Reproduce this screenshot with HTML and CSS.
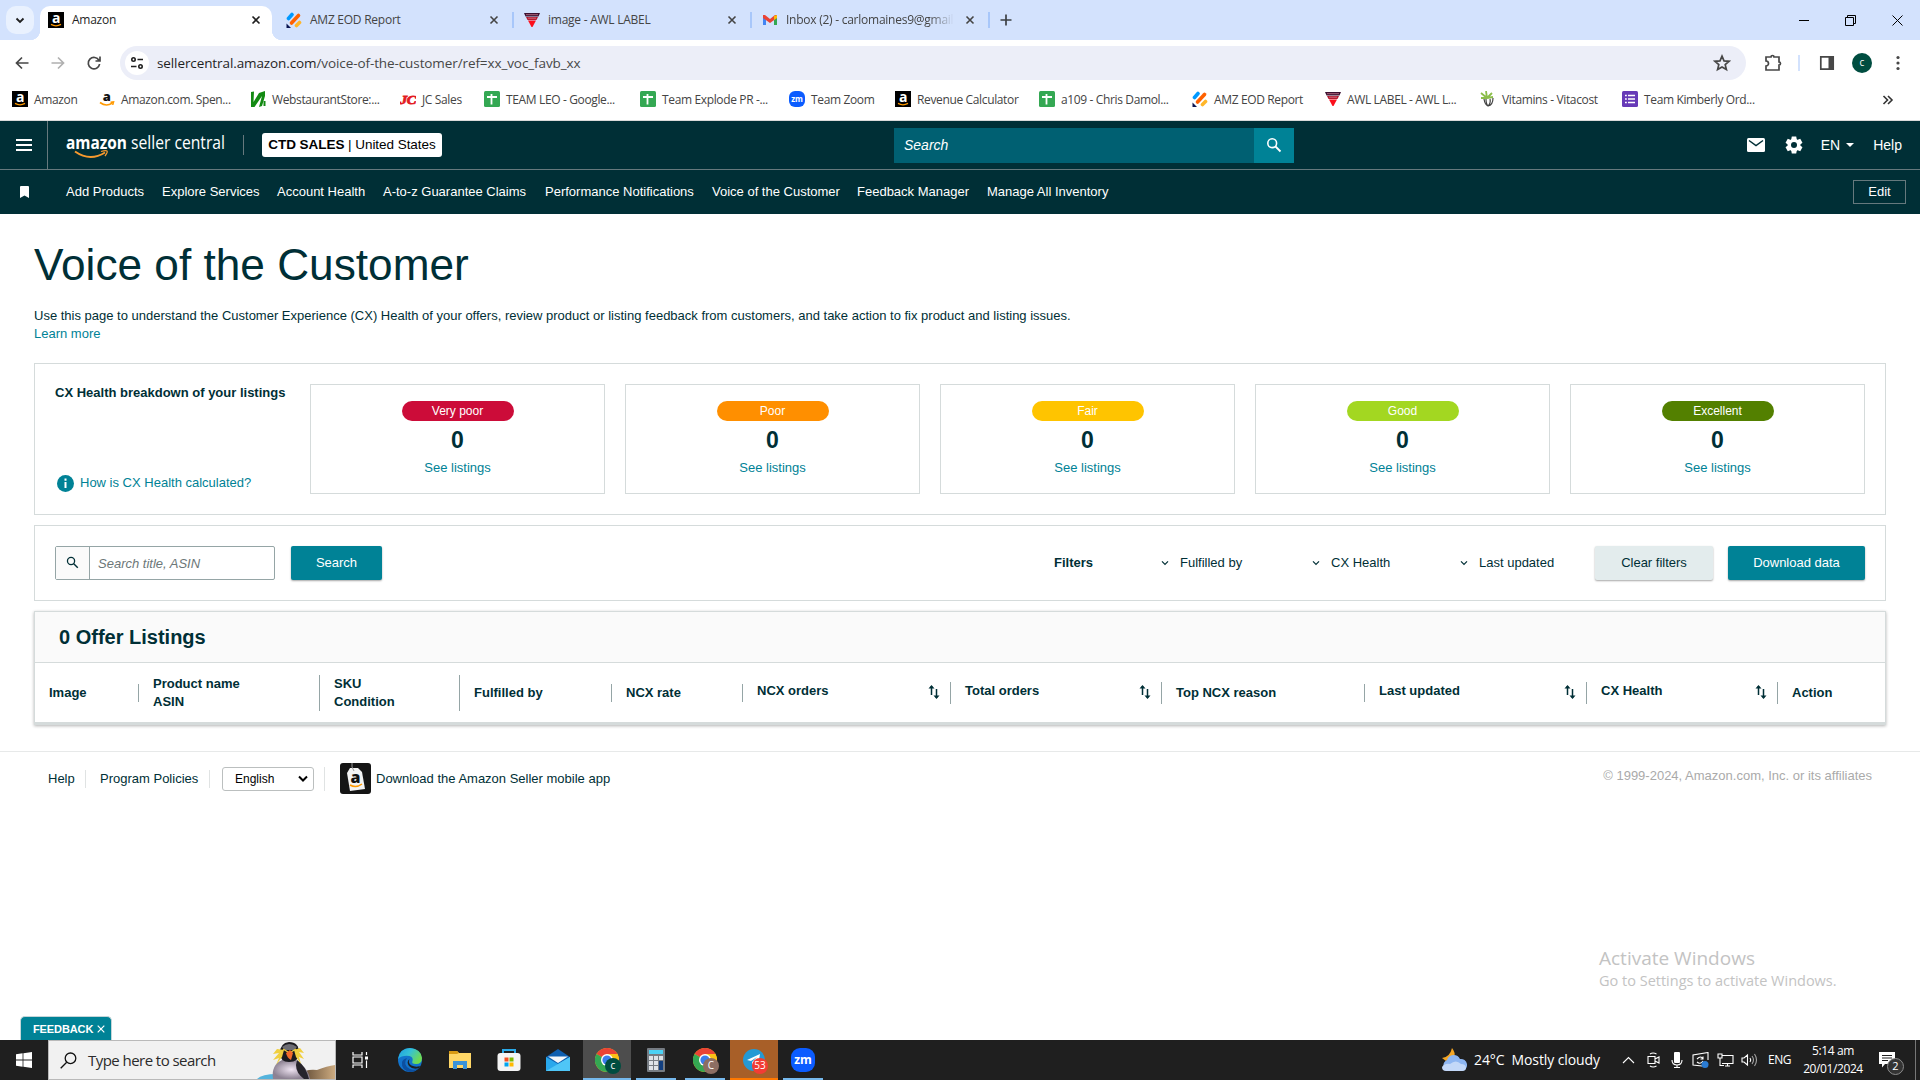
FILE: index.html
```html
<!DOCTYPE html>
<html lang="en">
<head>
  <meta charset="UTF-8" />
  <title>Amazon</title>
  <link rel="stylesheet" href="styles.css">
</head>
<body>
  <svg class="defs" width="0" height="0">
    <symbol id="amz" viewBox="0 0 16 16"><rect width="16" height="16" fill="#000"/><text x="8" y="11" text-anchor="middle" font-family="Open Sans" font-weight="700" font-size="14" fill="#fff">a</text><path d="M3 12.4q5 2.8 10 0" stroke="#f90" stroke-width="1.3" fill="none"/></symbol>
    <symbol id="amz-light" viewBox="0 0 16 16"><text x="7.5" y="10" text-anchor="middle" font-family="Open Sans" font-weight="800" font-size="13" fill="#111">a</text><path d="M1 11.5q6 4.500 12 .8M11.500 11.200l3-.3-.8 3" stroke="#f90" stroke-width="1.600" fill="none"/></symbol>
    <symbol id="jot" viewBox="0 0 16 16"><g stroke-linecap="round" stroke-width="3.600"><path d="M2.500 6.500L6 2.500" stroke="#0099ff"/><path d="M5.500 11L12.500 3.500" stroke="#ff6100"/><path d="M10.500 13.500L13.500 10.500" stroke="#ffb629"/></g><path d="M.5 11.500v4.500h4.500z" fill="#0a1551"/></symbol>
    <symbol id="awl" viewBox="0 0 16 16"><path d="M0 1h16l-1.500 3.500h-13z" fill="#3b1030"/><path d="M2 5h12l-1.500 3h-9z" fill="#b31a30"/><path d="M4 8.500h8L8.500 15h-1z" fill="#fb0f1c"/><path d="M2 2.700h12M4 6.200h8" stroke="#d89" stroke-width=".7"/></symbol>
    <symbol id="sheet" viewBox="0 0 16 16"><rect width="16" height="16" rx="1.500" fill="#34a853"/><path d="M3 6h10M7.500 3v10.500" stroke="#fff" stroke-width="1.800"/></symbol>
    <symbol id="zm" viewBox="0 0 24 24"><rect width="24" height="24" rx="9" fill="#0b5cff"/><text x="12" y="16" text-anchor="middle" font-family="Open Sans" font-weight="700" font-size="12" fill="#fff">zm</text></symbol>
    <symbol id="close" viewBox="0 0 10 10"><path d="M1.500 1.500l7 7M8.500 1.500l-7 7" stroke="currentColor" stroke-width="1.600"/></symbol>
    <symbol id="lens" viewBox="0 0 16 16"><circle cx="6.200" cy="6.200" r="4.400" fill="none" stroke="currentColor" stroke-width="1.600"/><path d="M9.500 9.500l5 5" stroke="currentColor" stroke-width="1.800"/></symbol>
    <symbol id="chev" viewBox="0 0 8 8"><path d="M1 2.300l3 3 3-3" fill="none" stroke="#002f36" stroke-width="1.200"/></symbol>
    <symbol id="sort" viewBox="0 0 12 16"><path d="M3.500 11V2M8.500 5v9" fill="none" stroke="#002f36" stroke-width="1.500"/><path d="M.5 4.500L3.500 1l3 3.500zM5.500 11.500l3 3.500 3-3.500z" fill="#002f36"/></symbol>
    <symbol id="chrome" viewBox="0 0 24 24"><circle cx="12" cy="12" r="12" fill="#fbc116"/><path d="M12 12L1.600 6A12 12 0 0 1 22.400 6z" fill="#ea4335"/><path d="M12 12L1.600 6A12 12 0 0 0 12 24l5.200-9z" fill="#34a853"/><path d="M12 6h10.400A12 12 0 0 1 12 24l5.200-9z" fill="#fbc116"/><circle cx="12" cy="12" r="6" fill="#fff"/><circle cx="12" cy="12" r="4.600" fill="#3b7ded"/></symbol>
  </svg>

  <div class="tabstrip">
    <div class="tab-search"><svg width="10" height="10" viewBox="0 0 10 10"><path d="M1.500 3.500L5 7l3.500-3.500" fill="none" stroke="#1f1f1f" stroke-width="1.800"/></svg></div>
    <div class="tab active"><svg class="fav"><use href="#amz"/></svg><span>Amazon</span><svg class="x"><use href="#close"/></svg></div>
    <div class="tab"><svg class="fav"><use href="#jot"/></svg><span>AMZ EOD Report</span><svg class="x"><use href="#close"/></svg></div>
    <div class="tab sep"><svg class="fav"><use href="#awl"/></svg><span>image - AWL LABEL</span><svg class="x"><use href="#close"/></svg></div>
    <div class="tab sep"><svg class="fav" viewBox="0 0 16 16"><path d="M1 3.500V13h3V7.500z" fill="#4285f4"/><path d="M15 3.500V13h-3V7.500z" fill="#34a853"/><path d="M1 3v3l7 5 7-5V3h-2L8 7 3 3z" fill="#ea4335"/><path d="M12 4l3-1v3l-3 2z" fill="#fbbc04"/></svg><span class="fade">Inbox (2) - carlomaines9@gmail</span><svg class="x"><use href="#close"/></svg></div>
    <div class="new-tab sep"><svg width="12" height="12" viewBox="0 0 12 12"><path d="M6 .5v11M.5 6h11" stroke="#3c4043" stroke-width="1.700"/></svg></div>
    <div class="win-controls">
      <svg width="10" height="11" viewBox="0 0 10 11"><path d="M0 5.500h10" stroke="#000"/></svg>
      <svg width="11" height="11" viewBox="0 0 11 11"><path d="M.5 2.500h8v8h-8zM2.500 2.500v-2h8v8h-2" fill="none" stroke="#000"/></svg>
      <svg width="11" height="11" viewBox="0 0 11 11"><path d="M.5.5l10 10M10.500.5l-10 10" stroke="#000"/></svg>
    </div>
  </div>

  <div class="toolbar">
    <svg width="16" height="16" viewBox="0 0 16 16" class="ico"><path d="M14.500 8H2.500M8 2.500L2.500 8 8 13.500"/></svg>
    <svg width="16" height="16" viewBox="0 0 16 16" class="ico dim"><path d="M1.500 8h12M8 2.500L13.500 8 8 13.500"/></svg>
    <svg width="16" height="16" viewBox="0 0 16 16" class="ico"><path d="M13 5.500A5.700 5.700 0 1 0 13.600 9M14 1.500v4.500H9.500"/></svg>
    <div class="omnibox">
      <div class="site"><svg width="14" height="14" viewBox="0 0 14 14"><g fill="none" stroke="#1f1f1f" stroke-width="1.600"><circle cx="3.500" cy="3.500" r="1.700"/><path d="M7.500 3.500H13M1 10.500h5.500"/><circle cx="10.500" cy="10.500" r="1.700"/></g></svg></div>
      <span class="url">sellercentral.amazon.com<i>/voice-of-the-customer/ref=xx_voc_favb_xx</i></span>
      <svg width="18" height="18" viewBox="0 0 18 18" class="ico star"><path d="M9 2.200l2 4.700 5 .4-3.800 3.300 1.200 4.900L9 12.900l-4.400 2.600 1.200-4.900L2 7.300l5-.4z"/></svg>
    </div>
    <div class="actions">
      <svg width="20" height="20" viewBox="0 0 20 20" class="ico"><path d="M3 4h5a1.500 1.500 0 0 1 3 0H16v5a1.500 1.500 0 0 1 0 3V17H3v-4a2.300 2.300 0 0 0 0-5z"/></svg>
      <b></b>
      <svg width="16" height="16" viewBox="0 0 16 16"><path d="M1.800 1.800h12.400v12.400H1.800z" fill="none" stroke="#474747" stroke-width="1.700"/><path d="M9.500 2h5v12h-5z" fill="#474747"/></svg>
      <span class="avatar">c</span>
      <svg width="4" height="16" viewBox="0 0 4 16" fill="#474747"><circle cx="2" cy="2.500" r="1.600"/><circle cx="2" cy="8" r="1.600"/><circle cx="2" cy="13.500" r="1.600"/></svg>
    </div>
  </div>

  <div class="bookmarks">
    <a><svg class="fav"><use href="#amz"/></svg>Amazon</a>
    <a><svg class="fav"><use href="#amz-light"/></svg>Amazon.com. Spen...</a>
    <a><svg class="fav" viewBox="0 0 16 16"><path d="M1 1l3-.5L3.500 11 9 2l6-2v5l-3 10-3 1 3-11L4.500 16H1z" fill="#138a13"/><path d="M14.500 10v5" stroke="#138a13" stroke-width="2"/></svg>WebstaurantStore:...</a>
    <a><svg class="fav" viewBox="0 0 16 16"><text x="0" y="12.500" textLength="16" lengthAdjust="spacingAndGlyphs" font-family="Liberation Serif" font-style="italic" font-weight="700" font-size="13" fill="#e31b23" stroke="#e31b23" stroke-width=".8">JC</text></svg>JC Sales</a>
    <a><svg class="fav"><use href="#sheet"/></svg>TEAM LEO - Google...</a>
    <a><svg class="fav"><use href="#sheet"/></svg>Team Explode PR -...</a>
    <a><svg class="fav"><use href="#zm"/></svg>Team Zoom</a>
    <a><svg class="fav"><use href="#amz"/></svg>Revenue Calculator</a>
    <a><svg class="fav"><use href="#sheet"/></svg>a109 - Chris Damol...</a>
    <a><svg class="fav"><use href="#jot"/></svg>AMZ EOD Report</a>
    <a><svg class="fav"><use href="#awl"/></svg>AWL LABEL - AWL L...</a>
    <a><svg class="fav" viewBox="0 0 16 16"><path d="M7 7L1 2M7 7L6 0M7 7l5-5M7 7L1 7M7 7l6-1" stroke="#8bbd4a" stroke-width="1.800"/><path d="M4 8q1 6 4 7 5-1 5-8M6 8q0 5 2 7 3-3 2-7" fill="none" stroke="#444" stroke-width="1.200"/></svg>Vitamins - Vitacost</a>
    <a><svg class="fav" viewBox="0 0 16 16"><rect width="16" height="16" rx="1.500" fill="#673ab7"/><path d="M3 4.500h1.800M3 8h1.800M3 11.500h1.800M6 4.500h7M6 8h7M6 11.500h7" stroke="#fff" stroke-width="1.700"/></svg>Team Kimberly Ord...</a>
    <svg width="12" height="10" viewBox="0 0 12 10"><path d="M1.500 1l4 4-4 4M6 1l4 4-4 4" fill="none" stroke="#333" stroke-width="1.600"/></svg>
  </div>

  <header class="sc-header">
    <div class="menu"><i></i><i></i><i></i></div>
    <svg class="logo" width="160" height="34" viewBox="0 0 160 34">
      <text x="0" y="21" textLength="61" lengthAdjust="spacingAndGlyphs" font-family="Open Sans" font-weight="700" font-size="18" fill="#fff">amazon</text>
      <text x="65" y="21" textLength="94" lengthAdjust="spacingAndGlyphs" font-family="Open Sans" font-size="18" fill="#fff">seller central</text>
      <path d="M9 23.500q15 10.500 30 1" fill="none" stroke="#f79a2e" stroke-width="2"/><path d="M35 23.500q5-1.500 6-.5t-2 5" fill="none" stroke="#f79a2e" stroke-width="1.300"/>
    </svg>
    <div class="account"><b>CTD SALES</b> | United States</div>
    <div class="sc-search"><span>Search</span><div><svg width="16" height="16"><use href="#lens"/></svg></div></div>
    <div class="sc-right">
      <svg width="18" height="14" viewBox="0 0 18 14"><rect width="18" height="14" rx="1.500" fill="#fff"/><path d="M2 2.500l7 5 7-5" fill="none" stroke="#002f36" stroke-width="1.500"/></svg>
      <svg class="gear" width="18" height="18" viewBox="0 0 18 18"><g fill="#fff"><circle cx="9" cy="9" r="6.300"/><path id="tooth" d="M6.800 0.500h4.400l.8 4H6z"/><use href="#tooth" transform="rotate(60 9 9)"/><use href="#tooth" transform="rotate(120 9 9)"/><use href="#tooth" transform="rotate(180 9 9)"/><use href="#tooth" transform="rotate(240 9 9)"/><use href="#tooth" transform="rotate(300 9 9)"/></g><circle cx="9" cy="9" r="3" fill="#002f36"/></svg>
      <span class="lang">EN</span>
      <span class="help">Help</span>
    </div>
  </header>

  <nav class="favbar">
    <svg width="9" height="12" viewBox="0 0 9 12"><path d="M0 1q0-1 1-1h7q1 0 1 1v11L4.500 9.500 0 12z" fill="#fff"/></svg>
    <a>Add Products</a><a>Explore Services</a><a>Account Health</a><a>A-to-z Guarantee Claims</a><a>Performance Notifications</a><a>Voice of the Customer</a><a>Feedback Manager</a><a>Manage All Inventory</a>
    <button>Edit</button>
  </nav>

  <main class="page">
    <h1>Voice of the Customer</h1>
    <p class="intro">Use this page to understand the Customer Experience (CX) Health of your offers, review product or listing feedback from customers, and take action to fix product and listing issues.<br><a>Learn more</a></p>

    <section class="card health">
      <div class="health-info">
        <b>CX Health breakdown of your listings</b>
        <a><svg width="17" height="17" viewBox="0 0 17 17"><circle cx="8.500" cy="8.500" r="8.500" fill="#008296"/><path d="M8.500 3.500v2.300M8.500 7v6" stroke="#fff" stroke-width="2"/></svg>How is CX Health calculated?</a>
      </div>
      <div class="score"><span class="pill very-poor">Very poor</span><strong>0</strong><a>See listings</a></div>
      <div class="score"><span class="pill poor">Poor</span><strong>0</strong><a>See listings</a></div>
      <div class="score"><span class="pill fair">Fair</span><strong>0</strong><a>See listings</a></div>
      <div class="score"><span class="pill good">Good</span><strong>0</strong><a>See listings</a></div>
      <div class="score"><span class="pill excellent">Excellent</span><strong>0</strong><a>See listings</a></div>
    </section>

    <section class="card filters">
      <div class="field"><div><svg width="13" height="13"><use href="#lens"/></svg></div><span>Search title, ASIN</span></div>
      <button class="btn search">Search</button>
      <b class="flabel">Filters</b>
      <span class="drop d1"><svg width="8" height="8"><use href="#chev"/></svg>Fulfilled by</span>
      <span class="drop d2"><svg width="8" height="8"><use href="#chev"/></svg>CX Health</span>
      <span class="drop d3"><svg width="8" height="8"><use href="#chev"/></svg>Last updated</span>
      <button class="btn clear">Clear filters</button>
      <button class="btn download">Download data</button>
    </section>

    <section class="listings">
      <h2>0 Offer Listings</h2>
      <div class="thead">
        <div>Image</div>
        <div>Product name<br>ASIN</div>
        <div>SKU<br>Condition</div>
        <div>Fulfilled by</div>
        <div>NCX rate</div>
        <div class="sortable">NCX orders<svg width="12" height="16"><use href="#sort"/></svg></div>
        <div class="sortable">Total orders<svg width="12" height="16"><use href="#sort"/></svg></div>
        <div>Top NCX reason</div>
        <div class="sortable">Last updated<svg width="12" height="16"><use href="#sort"/></svg></div>
        <div class="sortable">CX Health<svg width="12" height="16"><use href="#sort"/></svg></div>
        <div>Action</div>
      </div>
    </section>

    <footer>
      <a class="f-help">Help</a>
      <a class="f-policies">Program Policies</a>
      <div class="f-lang"><div class="select">English<svg width="10" height="8" viewBox="0 0 10 8"><path d="M1 1.500l4 4 4-4" fill="none" stroke="#000" stroke-width="2"/></svg></div></div>
      <svg class="app" width="31" height="31" viewBox="0 0 31 31"><rect width="31" height="31" rx="3" fill="#151515"/><path d="M7 10l3-5h8l4 4 3 17-15 2z" fill="#f4f4f4"/><path d="M14 8q-3-4-2-8" stroke="#999" fill="none"/><text x="15.500" y="20" text-anchor="middle" font-family="Open Sans" font-weight="800" font-size="16" fill="#111">a</text><path d="M10 22q6 3.500 12-1" stroke="#f90" stroke-width="1.500" fill="none"/></svg>
      <span>Download the Amazon Seller mobile app</span>
      <span class="copy">© 1999-2024, Amazon.com, Inc. or its affiliates</span>
    </footer>

    <div class="watermark"><p>Activate Windows</p><span>Go to Settings to activate Windows.</span></div>
    <div class="feedback">FEEDBACK<svg width="8" height="8" viewBox="0 0 8 8"><path d="M.7.7l6.600 6.600M7.300.7L.7 7.300" stroke="#fff" stroke-width="1.200"/></svg></div>
  </main>

  <div class="taskbar">
    <div class="start"><svg width="16" height="16" viewBox="0 0 16 16" fill="#fff"><path d="M0 2.200L6.600 1.300v6.300H0zM7.400 1.200L16 0v7.600H7.400zM0 8.400h6.600v6.300L0 13.800zM7.400 8.400H16V16l-8.600-1.200z"/></svg></div>
    <div class="tb-search">
      <svg width="17" height="17" viewBox="0 0 17 17"><circle cx="10.500" cy="6.300" r="5.300" fill="none" stroke="#111" stroke-width="1.300"/><path d="M6.700 10.200L.7 16.200" stroke="#111" stroke-width="1.300"/></svg>
      <span>Type here to search</span>
      <svg class="penguin" width="78" height="38" viewBox="0 0 78 38"><defs><linearGradient id="sand" x1="0" x2="1"><stop offset="0" stop-color="#6b543c"/><stop offset="1" stop-color="#cdab80"/></linearGradient><radialGradient id="belly"><stop offset="0" stop-color="#efe4f2"/><stop offset="1" stop-color="#8d8293"/></radialGradient></defs>
        <path d="M0 38q5-5 20-5v5z" fill="#55b3dc"/><path d="M48 30q6-2 12-1 10-4 18-5v14H50z" fill="url(#sand)"/>
        <path d="M16 38q-2-14 9-19h14q12 8 14 19z" fill="url(#belly)"/><path d="M40 19q9 6 12 19h-5q-8-6-8-14z" fill="#26242b"/>
        <path d="M23 12q0-10 9-11 10 0 10 11 0 9-10 9-9 0-9-9z" fill="#1c1b20"/><path d="M25 6q7-6 15 0l-3 3H28z" fill="#6c6c74"/>
        <path d="M27 9l-7-1-4 5 6-1-6 7 6-2-3 7 6-8zM37 9l6-2 4 5-5-1 5 7-5-2 2 7-5-7z" fill="#f0cf3e"/><path d="M26 8l5 3M39 8l-5 3" stroke="#f0cf3e" stroke-width="1.300"/><path d="M29 12l4-3 3 3-2 7q-4-2-5-7z" fill="#f26a2a"/></svg>
    </div>
    <div class="app-btn"><svg width="17" height="16" viewBox="0 0 17 16"><path d="M1 0v3h9V0M1 5h9v6H1zM1 16v-3h9v3M14.500 0v3M14.500 8.500V16" fill="none" stroke="#fff" stroke-width="1.200"/><path d="M13 4.500h3v3h-3z" fill="#fff"/></svg></div>
    <div class="app-btn edge"><svg width="24" height="24" viewBox="0 0 24 24"><defs><linearGradient id="eg" x1="0" y1="0" x2="1" y2=".5"><stop offset="0" stop-color="#1b9de2"/><stop offset=".5" stop-color="#35c1d6"/><stop offset="1" stop-color="#6fdb52"/></linearGradient></defs><circle cx="12" cy="12" r="12" fill="#1273cc"/><path d="M0 11Q2 0 12 0q11 1 12 10 0 6-6 6-5 0-3.500-3 1-4-3-5Q4 7 0 11z" fill="url(#eg)"/><path d="M9 10q-5 7 3 11 5 2 9-1-4 4-9 4Q3 22 4 14q1-3 5-4z" fill="#0c4fa0"/><path d="M11.500 11q-2 4 2 6.500 4 2 8.500.5l-1 2q-6 2-10-2-3-4 .5-7z" fill="#1f1f1f"/></svg></div>
    <div class="app-btn"><svg width="22" height="18" viewBox="0 0 22 18"><path d="M0 0h8l2 2h12v15H0z" fill="#ffd767"/><path d="M0 0h8l2 2-2 1H0z" fill="#d99b14"/><path d="M4 18v-8h14v8h-4v-4H8v4z" fill="#3a93d8"/></svg></div>
    <div class="app-btn"><svg width="24" height="24" viewBox="0 0 24 24"><path d="M6 7V2h12v5" fill="none" stroke="#29a9e8" stroke-width="2"/><rect x=".5" y="5" width="23" height="18" rx="3" fill="#f4f4f4"/><path d="M7.500 9.500h4v4h-4z" fill="#f25022"/><path d="M12.500 9.500h4v4h-4z" fill="#7fba00"/><path d="M7.500 14.500h4v4h-4z" fill="#00a4ef"/><path d="M12.500 14.500h4v4h-4z" fill="#ffb900"/></svg></div>
    <div class="app-btn"><svg width="24" height="22" viewBox="0 0 24 22"><path d="M0 8L12 0l12 8v14H0z" fill="#0f5fb0"/><path d="M0 8l12 7 12-7v14H0z" fill="#29a8ec"/><path d="M0 22L24 8v14z" fill="#4fc6f7"/><path d="M2 7.500h20L12 14z" fill="#f4f7fa"/></svg></div>
    <div class="app-btn focus"><svg width="24" height="24"><use href="#chrome"/></svg><span class="badge green">c</span></div>
    <div class="app-btn run"><svg width="18" height="24" viewBox="0 0 18 24"><rect width="18" height="24" rx="1" fill="#767c83"/><path d="M2 2h14v4H2z" fill="#4dd2f5"/><g fill="#dfe3e8"><path d="M2 8h4v4H2zM7 8h4v4H7zM12 8h4v4h-4zM2 13h4v4H2zM7 13h4v4H7zM2 18h4v4H2zM7 18h4v4H7z"/></g><path d="M12 13h4v9h-4z" fill="#123f80"/></svg></div>
    <div class="app-btn run"><svg width="24" height="24"><use href="#chrome"/></svg><span class="badge brown">C</span></div>
    <div class="app-btn alert"><svg width="22" height="22" viewBox="0 0 22 22"><circle cx="11" cy="11" r="11" fill="#2499d4"/><path d="M4 11L17 5l-2 12-4-3-2 2v-3l5-5-6 4z" fill="#fff"/></svg><span class="badge red">53</span></div>
    <div class="app-btn run"><svg width="24" height="24"><use href="#zm"/></svg></div>
    <div class="tray">
      <svg width="26" height="24" viewBox="0 0 26 24"><path d="M11 0q4 5 2 9l-8 4-4-3q8-1 10-10z" fill="#f5a623"/><path d="M6 23a6 6 0 0 1 0-11 7 7 0 0 1 13-1 6 6 0 0 1 2 12z" fill="#8eb6f1"/><path d="M5 23q-4 0-4-4 3-4 8-3 6-5 11 0 5 0 5 4 0 3-4 3z" fill="#c3d8f8"/></svg>
      <span class="weather">24°C&nbsp; Mostly cloudy</span>
      <svg class="t1" width="13" height="8" viewBox="0 0 13 8"><path d="M1 7l5.500-5.500L12 7"/></svg>
      <svg class="t2" width="13" height="16" viewBox="0 0 13 16"><path d="M1 4.500h7v7H1zM8 7l4-2v6L8 9M3 2q3-2 6.500 0M3 14q3 2 6.500 0"/></svg>
      <svg class="t3" width="12" height="16" viewBox="0 0 12 16"><rect x="3" y="0" width="6" height="11" rx="1" fill="#fff" stroke="none"/><path d="M1 8q0 5 5 5t5-5M6 13v3M3 15.500h6"/></svg>
      <svg class="t4" width="17" height="16" viewBox="0 0 17 16"><path d="M10 14L1 13V3l15-2.500V8M5 7q4-4 6 0M5 10q3 3 6-1M11 4.500V7H8.500"/><circle cx="13" cy="12.500" r="3.500" fill="#2b7cd3" stroke="none"/></svg>
      <svg class="t5" width="17" height="14" viewBox="0 0 17 14"><path d="M5 2.500h11v8H5M8 13h5M10.500 10.500V13M1 1h4v4H1zM3 5v7.500h4"/></svg>
      <svg class="t6" width="17" height="14" viewBox="0 0 17 14"><path d="M1 5h2l3.500-3v10L3 9H1zM9 5q1.500 2 0 4"/><path d="M11 3q3 4 0 8M13.500 1q4 6 0 12" opacity=".6"/></svg>
      <span class="eng">ENG</span>
      <div class="clock">5:14 am<br>20/01/2024</div>
      <div class="notif"><svg width="16" height="16" viewBox="0 0 16 16"><path d="M0 0h16v12H6l-3 3.500V12H0z" fill="#fff" stroke="none"/><path d="M3 3.500h10M3 6h10M3 8.500h6" stroke="#1f1f1f"/></svg><span>2</span></div>
    </div>
  </div>
</body>
</html>
```

FILE: styles.css
```css
* {
  box-sizing: border-box;
}
body {
  margin: 0;
  width: 1920px;
  height: 1080px;
  overflow: hidden;
  display: flex;
  flex-direction: column;
  background: #fff;
  color: #002f36;
  font: 13px/18px "Liberation Sans", Arial, sans-serif;
}
svg {
  flex: none;
  display: block;
}
.defs {
  display: none;
}
.fav {
  width: 16px;
  height: 16px;
}

/* browser */
.tabstrip,
.toolbar,
.bookmarks,
.taskbar,
.watermark {
  font-family: "Open Sans", "Noto Sans", sans-serif;
}
.tabstrip {
  flex: none;
  height: 40px;
  background: #d3e2fd;
  display: flex;
  padding: 6px 0 0 6px;
  font-size: 12px;
  letter-spacing: -0.25px;
  color: #444;
}
.tab-search {
  width: 28px;
  height: 28px;
  border-radius: 10px;
  background: #e9f1fe;
  display: flex;
  align-items: center;
  justify-content: center;
  margin-right: 6px;
}
.tab {
  width: 238px;
  height: 28px;
  display: flex;
  align-items: center;
  padding: 0 17px 0 8px;
  position: relative;
}
.tab span {
  flex: 1;
  margin: 0 16px 0 8px;
  white-space: nowrap;
}
.tab .fade {
  margin-right: 11px;
  overflow: hidden;
  -webkit-mask-image: linear-gradient(90deg, #000 85%, transparent);
  mask-image: linear-gradient(90deg, #000 85%, transparent);
}
.tab .x {
  width: 10px;
  height: 10px;
}
.tab.active {
  width: 232px;
  height: 34px;
  padding: 0 11px 6px 8px;
  margin-right: 6px;
  background: #fff;
  border-radius: 10px 10px 0 0;
  color: #1f1f1f;
}
.tab.active::after {
  content: "";
  position: absolute;
  left: 100%;
  bottom: 0;
  width: 10px;
  height: 10px;
  background: radial-gradient(circle at 100% 0, transparent 10px, #fff 10.5px);
}
.tab.active::before {
  content: "";
  position: absolute;
  right: 100%;
  bottom: 0;
  width: 10px;
  height: 10px;
  background: radial-gradient(circle at 0 0, transparent 10px, #fff 10.5px);
}
.sep::before {
  content: "";
  position: absolute;
  left: -4px;
  top: 6px;
  width: 2px;
  height: 16px;
  background: #a8c7fa;
}
.new-tab {
  position: relative;
  height: 28px;
  display: flex;
  align-items: center;
  padding-left: 8px;
}
.win-controls {
  margin-left: auto;
  display: flex;
  gap: 36px;
  padding: 9px 17px 0 0;
}
.toolbar {
  flex: none;
  height: 40px;
  padding: 6px 20px 0 14px;
  display: flex;
  align-items: center;
  gap: 20px;
}
.ico {
  fill: none;
  stroke: #474747;
  stroke-width: 1.7;
}
.dim {
  stroke: #b0b0b0;
}
.omnibox {
  flex: none;
  width: 1626px;
  height: 34px;
  margin-left: -2px;
  border-radius: 17px;
  background: #eceef8;
  display: flex;
  align-items: center;
  padding: 0 15px 0 5px;
}
.site {
  width: 24px;
  height: 24px;
  border-radius: 50%;
  background: #fff;
  display: flex;
  align-items: center;
  justify-content: center;
  margin-right: 8px;
}
.url {
  font-size: 13.5px;
  letter-spacing: -0.1px;
  color: #1f1f1f;
}
.url i {
  font-style: normal;
  color: #474747;
}
.star {
  margin-left: auto;
}
.actions {
  display: flex;
  align-items: center;
  margin-left: -3px;
}
.actions b {
  width: 2px;
  height: 16px;
  background: #d3e2fd;
  margin: 0 19px 0 15px;
}
.avatar {
  width: 20px;
  height: 20px;
  border-radius: 50%;
  background: #004d40;
  color: #fff;
  font-size: 10px;
  line-height: 19px;
  text-align: center;
  margin: 0 24px 0 17px;
}
.bookmarks {
  flex: none;
  height: 41px;
  padding: 0 0 1px 12px;
  border-bottom: 1px solid #dadada;
  display: grid;
  grid-template-columns: 87px 151px 150px 84px 156px 149px 106px 144px 153px 133px 155px 142px 260px auto;
  align-items: center;
  font-size: 12px;
  letter-spacing: -0.36px;
  color: #444;
}
.bookmarks a {
  display: flex;
  gap: 6px;
  white-space: nowrap;
}

/* seller central header */
.sc-header {
  flex: none;
  height: 49px;
  background: #002f36;
  border-bottom: 1px solid #66797d;
  display: flex;
  align-items: center;
  color: #fff;
  font-size: 14px;
}
.menu {
  width: 48px;
  height: 48px;
  padding: 18px 15px 0 16px;
  border-right: 1px solid #66797d;
}
.menu i {
  display: block;
  height: 2px;
  margin-bottom: 3px;
  background: #fff;
}
.logo {
  margin-left: 18px;
}
.account {
  margin-left: 36px;
  height: 24px;
  width: 180px;
  background: #fff;
  border-radius: 3px;
  color: #000;
  font-size: 13.5px;
  letter-spacing: -0.05px;
  line-height: 24px;
  text-align: center;
  position: relative;
  white-space: nowrap;
}
.account::before {
  content: "";
  position: absolute;
  left: -19px;
  top: 2px;
  width: 1px;
  height: 20px;
  background: #66797d;
}
.sc-search {
  margin-left: 452px;
  width: 400px;
  height: 35px;
  display: flex;
  background: #006072;
  line-height: 34px;
}
.sc-search span {
  flex: 1;
  padding-left: 10px;
  font-style: italic;
}
.sc-search div {
  width: 40px;
  background: #008296;
  padding: 9px 10px 9px 12px;
}
.sc-right {
  margin-left: auto;
  display: flex;
  align-items: center;
  padding-right: 18px;
}
.gear {
  margin-left: 20px;
}
.lang {
  margin-left: 18px;
}
.lang::after {
  content: "";
  display: inline-block;
  margin: 0 0 3px 6px;
  border: 4px solid transparent;
  border-top-color: #fff;
  border-bottom: 0;
}
.help {
  margin-left: 19px;
}
.favbar {
  flex: none;
  height: 44px;
  background: #002f36;
  color: #fff;
  display: grid;
  grid-template-columns: 46px 96px 115px 106px 162px 167px 145px 130px 866px 53px;
  padding-left: 20px;
  align-items: center;
  white-space: nowrap;
}
.favbar button {
  height: 24px;
  padding: 0 0 2px;
  background: none;
  border: 1px solid #66797d;
  color: #fff;
  font: 13px "Liberation Sans", Arial, sans-serif;
}

/* page */
.page {
  flex: 1;
  padding: 26px 34px 0;
  position: relative;
}
a {
  text-decoration: none;
}
.page p a,
.health a {
  color: #008296;
}
h1 {
  margin: 0;
  font-size: 44.2px;
  line-height: 50px;
  font-weight: 400;
}
.intro {
  margin: 17px 0 20px;
}
.card {
  border: 1px solid #d5dbdb;
  padding: 20px;
  display: flex;
}
.health {
  height: 152px;
  gap: 20px;
}
.health-info {
  width: 235px;
  display: flex;
  flex-direction: column;
  justify-content: space-between;
  white-space: nowrap;
}
.health-info a {
  display: flex;
  align-items: center;
  gap: 6px;
  padding: 0 0 2px 2px;
}
.score {
  flex: none;
  width: 295px;
  height: 110px;
  border: 1px solid #d5dbdb;
  display: flex;
  flex-direction: column;
  align-items: center;
  padding-top: 16px;
}
.pill {
  width: 112px;
  height: 20px;
  border-radius: 10px;
  color: #fff;
  font-size: 12px;
  line-height: 20px;
  text-align: center;
}
.very-poor { background: #cc0c39; }
.poor { background: #ff8f00; }
.fair { background: #ffc400; }
.good { background: #a3d721; }
.excellent { background: #538000; }
.score strong {
  font-size: 23px;
  line-height: 28px;
  margin: 5px 0;
}
.filters {
  height: 76px;
  margin: 10px 0;
  align-items: flex-start;
  line-height: 34px;
  white-space: nowrap;
}
.field {
  width: 220px;
  height: 34px;
  border: 1px solid #95a5a6;
  border-radius: 2px;
  display: flex;
  color: #6c7778;
  font-style: italic;
}
.field div {
  width: 34px;
  background: #fafafa;
  border-right: 1px solid #95a5a6;
  padding: 9px 10px;
  color: #002f36;
}
.field span {
  padding-left: 8px;
}
.btn {
  height: 34px;
  padding: 0 0 2px;
  border: 0;
  border-radius: 2px;
  background: #008296;
  box-shadow: 0 1px 2px rgba(0, 0, 0, 0.35);
  color: #fff;
  font: 13px "Liberation Sans", Arial, sans-serif;
}
.search {
  width: 91px;
  margin-left: 16px;
}
.flabel {
  width: 107px;
  margin-left: 672px;
}
.drop {
  display: flex;
  align-items: center;
  gap: 11px;
}
.d1 { width: 151px; }
.d2 { width: 148px; }
.d3 { width: 136px; margin-right: -1px; }
.clear {
  width: 118px;
  background: #e3eced;
  color: #002f36;
}
.download {
  width: 137px;
  margin-left: 15px;
}
.listings {
  height: 114px;
  border: 1px solid #d5dbdb;
  border-bottom-width: 3px;
  box-shadow: 0 1px 3px rgba(0, 0, 0, 0.3);
}
h2 {
  margin: 0;
  height: 51px;
  padding-left: 24px;
  font-size: 20px;
  line-height: 50px;
  background: #fafafa;
  border-bottom: 1px solid #d5dbdb;
}
.thead {
  height: 60px;
  padding-left: 14px;
  display: grid;
  grid-template-columns: 104px 181px 140px 152px 131px 208px 211px 203px 222px 191px auto;
  align-items: center;
  font-weight: 700;
}
.thead > div {
  white-space: nowrap;
}
.thead > div:not(:last-child) {
  border-right: 1px solid #95a5a6;
  margin-right: 14px;
}
.sortable {
  display: flex;
  justify-content: space-between;
  height: 22px;
  padding-right: 10px;
}
.sortable svg {
  margin-top: 2px;
}
footer {
  margin: 26px -34px 0;
  border-top: 1px solid #e7e9e9;
  padding: 11px 48px 0;
  display: flex;
  align-items: center;
}
.f-help,
.f-policies,
.f-lang {
  border-right: 1px solid #e0e3e3;
}
.f-help { width: 38px; }
.f-policies { width: 124px; padding-left: 14px; }
.f-lang { width: 115px; padding-left: 12px; }
.select {
  width: 92px;
  height: 24px;
  border: 1px solid #bbbfbf;
  border-radius: 3px;
  color: #000;
  line-height: 22px;
  font-size: 12px;
  padding: 0 5px 0 12px;
  display: flex;
  justify-content: space-between;
  align-items: center;
}
.app {
  margin: 0 5px 0 15px;
}
.copy {
  margin-left: auto;
  color: #aaa;
  padding-bottom: 6px;
}
.watermark {
  position: absolute;
  left: 1599px;
  top: 732px;
  color: #c3c3c3;
  font-size: 14.500px;
  line-height: 20px;
  white-space: nowrap;
}
.watermark p {
  margin: 0 0 1px;
  font-size: 19px;
  line-height: 24px;
}
.feedback {
  position: absolute;
  left: 20px;
  bottom: 0;
  width: 92px;
  height: 24px;
  border: 1px solid #c5d5d8;
  border-bottom: 0;
  border-radius: 5px 5px 0 0;
  background: #008296;
  color: #fff;
  font-size: 11px;
  letter-spacing: -0.1px;
  font-weight: 700;
  line-height: 24px;
  display: flex;
  align-items: center;
  gap: 4px;
  padding-left: 12px;
}

/* windows taskbar */
.taskbar {
  flex: none;
  height: 40px;
  background: #1f1f1f;
  display: flex;
  color: #fff;
}
.start {
  width: 48px;
  padding: 12px 16px;
}
.tb-search {
  width: 288px;
  background: #f1f1f1;
  border: 1px solid #b9b9b9;
  color: #2b2b2b;
  display: flex;
  align-items: center;
  padding-left: 11px;
  font-size: 15px;
  letter-spacing: -0.55px;
}
.tb-search span {
  margin-left: 11px;
  white-space: nowrap;
}
.penguin {
  margin-left: auto;
}
.app-btn {
  flex: none;
  width: 48px;
  margin-right: 1px;
  display: flex;
  align-items: center;
  justify-content: center;
  position: relative;
}
.tb-search + .app-btn,
.app-btn.edge {
  margin-right: 2px;
}
.focus {
  background: #4d4d4d;
}
.alert {
  background: #a85f28;
}
.focus::after,
.run::after,
.alert::after {
  content: "";
  position: absolute;
  left: 4px;
  right: 4px;
  bottom: 0;
  height: 2px;
  background: #76b9ed;
}
.focus::after,
.alert::after {
  left: 0;
  right: 0;
}
.alert::after {
  background: #ff7800;
}
.badge {
  position: absolute;
  left: 22px;
  top: 18px;
  width: 16px;
  height: 16px;
  border-radius: 8px;
  font-size: 10px;
  line-height: 15px;
  text-align: center;
}
.green { background: #004d40; }
.brown { background: #8d6e63; }
.red { background: #f23c34; }
.tray {
  margin-left: auto;
  display: flex;
  align-items: center;
  white-space: nowrap;
  border-right: 1px solid #777;
  margin-right: 4px;
}
.tray svg {
  fill: none;
  stroke: #fff;
  stroke-width: 1.1;
}
.tray > svg:first-child {
  stroke: none;
}
.weather {
  width: 148px;
  margin-left: 7px;
  font-size: 14px;
  letter-spacing: -0.1px;
}
.t2 { margin-left: 12px; }
.t3 { margin-left: 11px; }
.t4 { margin-left: 9px; }
.t5 { margin-left: 8px; }
.t6 { margin-left: 7px; }
.eng {
  width: 23px;
  margin-left: 10px;
  font-size: 12px;
  letter-spacing: -0.5px;
}
.clock {
  width: 84px;
  font-size: 12px;
  letter-spacing: -0.4px;
  text-align: center;
}
.notif {
  width: 36px;
  margin-left: 4px;
  position: relative;
}
.notif span {
  position: absolute;
  left: 8px;
  top: 6px;
  width: 17px;
  height: 17px;
  border-radius: 50%;
  border: 1px solid #8b8b8b;
  background: #333;
  font-size: 11px;
  line-height: 14px;
  text-align: center;
}
```
